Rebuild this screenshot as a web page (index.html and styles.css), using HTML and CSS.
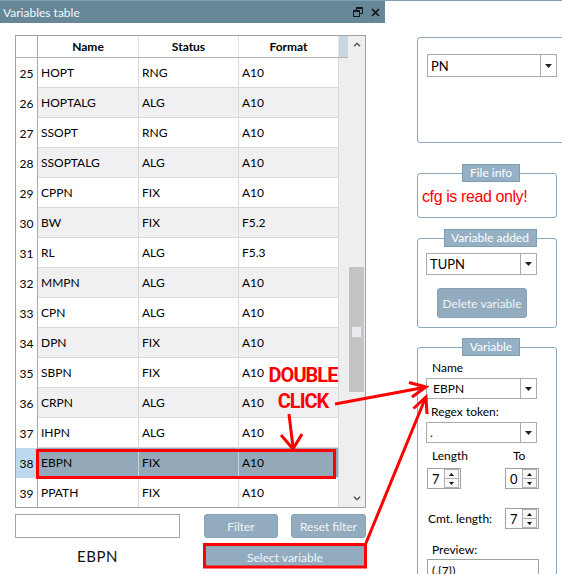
FILE: index.html
```html
<!DOCTYPE html>
<html>
<head>
<meta charset="utf-8">
<title>Variables table</title>
<link rel="stylesheet" href="styles.css">
</head>
<body>
<div class="window">
  <div class="left">
    <div class="titlebar">
      <span class="title">Variables table</span>
      <span class="tb-icons">
        <svg class="ic-restore" width="10" height="10" viewBox="0 0 10 10"><path d="M3.5 3 V0.5 H9.5 V6.5 H7" fill="none" stroke="#161616" stroke-width="1"/><rect x="3" y="0" width="7" height="2" fill="#161616"/><rect x="0.5" y="3.5" width="6" height="6" fill="none" stroke="#161616" stroke-width="1"/><rect x="0" y="3" width="7" height="2" fill="#161616"/></svg>
        <svg class="ic-close" width="9" height="9" viewBox="0 0 9 9"><path d="M1 1 L8 8 M8 1 L1 8" stroke="#161616" stroke-width="1.7" fill="none"/></svg>
      </span>
    </div>
    <div class="pane">
      <div class="table">
        <div class="grid">
          <div class="row head"><div class="c rh"></div><div class="c col-name">Name</div><div class="c col-status">Status</div><div class="c col-format">Format</div><div class="filler"></div></div>
          <div class="row"><div class="c rh">25</div><div class="c col-name">HOPT</div><div class="c col-status">RNG</div><div class="c col-format">A10</div><div class="filler"></div></div>
          <div class="row alt"><div class="c rh">26</div><div class="c col-name">HOPTALG</div><div class="c col-status">ALG</div><div class="c col-format">A10</div><div class="filler"></div></div>
          <div class="row"><div class="c rh">27</div><div class="c col-name">SSOPT</div><div class="c col-status">RNG</div><div class="c col-format">A10</div><div class="filler"></div></div>
          <div class="row alt"><div class="c rh">28</div><div class="c col-name">SSOPTALG</div><div class="c col-status">ALG</div><div class="c col-format">A10</div><div class="filler"></div></div>
          <div class="row"><div class="c rh">29</div><div class="c col-name">CPPN</div><div class="c col-status">FIX</div><div class="c col-format">A10</div><div class="filler"></div></div>
          <div class="row alt"><div class="c rh">30</div><div class="c col-name">BW</div><div class="c col-status">FIX</div><div class="c col-format">F5.2</div><div class="filler"></div></div>
          <div class="row"><div class="c rh">31</div><div class="c col-name">RL</div><div class="c col-status">ALG</div><div class="c col-format">F5.3</div><div class="filler"></div></div>
          <div class="row alt"><div class="c rh">32</div><div class="c col-name">MMPN</div><div class="c col-status">ALG</div><div class="c col-format">A10</div><div class="filler"></div></div>
          <div class="row"><div class="c rh">33</div><div class="c col-name">CPN</div><div class="c col-status">ALG</div><div class="c col-format">A10</div><div class="filler"></div></div>
          <div class="row alt"><div class="c rh">34</div><div class="c col-name">DPN</div><div class="c col-status">FIX</div><div class="c col-format">A10</div><div class="filler"></div></div>
          <div class="row"><div class="c rh">35</div><div class="c col-name">SBPN</div><div class="c col-status">FIX</div><div class="c col-format">A10</div><div class="filler"></div></div>
          <div class="row alt"><div class="c rh">36</div><div class="c col-name">CRPN</div><div class="c col-status">ALG</div><div class="c col-format">A10</div><div class="filler"></div></div>
          <div class="row"><div class="c rh">37</div><div class="c col-name">IHPN</div><div class="c col-status">ALG</div><div class="c col-format">A10</div><div class="filler"></div></div>
          <div class="row sel"><div class="c rh">38</div><div class="c col-name">EBPN</div><div class="c col-status">FIX</div><div class="c col-format">A10</div><div class="filler"></div></div>
          <div class="row"><div class="c rh">39</div><div class="c col-name">PPATH</div><div class="c col-status">FIX</div><div class="c col-format">A10</div><div class="filler"></div></div>
        </div>
        <div class="vscroll">
          <div class="sb-btn"><svg width="8" height="5" viewBox="0 0 8 5"><path d="M1 4.2 L4 1.2 L7 4.2" fill="none" stroke="#555" stroke-width="1.5"/></svg></div>
          <div class="sb-track"><div class="thumb"><span class="grip"></span></div></div>
          <div class="sb-btn"><svg width="8" height="5" viewBox="0 0 8 5"><path d="M1 0.8 L4 3.8 L7 0.8" fill="none" stroke="#555" stroke-width="1.5"/></svg></div>
        </div>
      </div>
      <div class="bottom">
        <div class="filter-col">
          <div class="textbox"></div>
          <div class="sel-label">EBPN</div>
        </div>
        <div class="btn-col">
          <div class="btn-row">
            <button class="btn btn-filter">Filter</button>
            <button class="btn btn-reset">Reset filter</button>
          </div>
          <button class="btn btn-select">Select variable</button>
        </div>
      </div>
    </div>
  </div>
  <div class="right">
    <div class="box1">
      <div class="combo combo-pn"><span class="cv">PN</span><span class="dd"><svg width="7" height="4" viewBox="0 0 7 4"><path d="M0 0 H7 L3.5 4 Z" fill="#222"/></svg></span></div>
    </div>
    <fieldset class="grp grp-info">
      <legend class="lg-info">File info</legend>
      <div class="ro">cfg is read only!</div>
    </fieldset>
    <fieldset class="grp grp-added">
      <legend class="lg-added">Variable added</legend>
      <div class="gbody">
        <div class="combo"><span class="cv">TUPN</span><span class="dd"><svg width="7" height="4" viewBox="0 0 7 4"><path d="M0 0 H7 L3.5 4 Z" fill="#222"/></svg></span></div>
        <button class="btn btn-del">Delete variable</button>
      </div>
    </fieldset>
    <fieldset class="grp grp-var">
      <legend class="lg-var">Variable</legend>
      <div class="gbody">
        <div class="lbl lbl-name">Name</div>
        <div class="combo combo-sm"><span class="cv cv-e">EBPN</span><span class="dd"><svg width="7" height="4" viewBox="0 0 7 4"><path d="M0 0 H7 L3.5 4 Z" fill="#222"/></svg></span></div>
        <div class="lbl lbl-regex">Regex token:</div>
        <div class="combo combo-sm"><span class="cv">.</span><span class="dd"><svg width="7" height="4" viewBox="0 0 7 4"><path d="M0 0 H7 L3.5 4 Z" fill="#222"/></svg></span></div>
        <div class="lenrow"><span class="lbl len">Length</span><span class="lbl to">To</span></div>
        <div class="spinrow">
          <div class="spin spin-a"><span>7</span><span class="sbtns"><span class="sbt"><svg width="5" height="3" viewBox="0 0 5 3"><path d="M0 3 H5 L2.5 0 Z" fill="#111"/></svg></span><span class="sbt"><svg width="5" height="3" viewBox="0 0 5 3"><path d="M0 0 H5 L2.5 3 Z" fill="#111"/></svg></span></span></div>
          <div class="spin"><span>0</span><span class="sbtns"><span class="sbt"><svg width="5" height="3" viewBox="0 0 5 3"><path d="M0 3 H5 L2.5 0 Z" fill="#111"/></svg></span><span class="sbt"><svg width="5" height="3" viewBox="0 0 5 3"><path d="M0 0 H5 L2.5 3 Z" fill="#111"/></svg></span></span></div>
        </div>
        <div class="cmtrow">
          <span class="cmt">Cmt. length:</span>
          <div class="spin"><span>7</span><span class="sbtns"><span class="sbt"><svg width="5" height="3" viewBox="0 0 5 3"><path d="M0 3 H5 L2.5 0 Z" fill="#111"/></svg></span><span class="sbt"><svg width="5" height="3" viewBox="0 0 5 3"><path d="M0 0 H5 L2.5 3 Z" fill="#111"/></svg></span></span></div>
        </div>
        <div class="lbl lbl-prev">Preview:</div>
        <div class="preview">(.{7})</div>
      </div>
    </fieldset>
  </div>
</div>

<svg class="annot" width="562" height="574" viewBox="0 0 562 574">
  <g fill="none" stroke="#ff0000" stroke-width="3" stroke-linejoin="miter">
    <rect x="37.5" y="450.5" width="297" height="27"/>
    <rect x="204.5" y="544.5" width="161" height="22.5"/>
    <path d="M289 414 L293 447"/>
    <path d="M281 435 L293 449 L302 434"/>
    <path d="M335 404 L424 387.5"/>
    <path d="M409 382.5 L426 387 L412 397"/>
    <path d="M366 543 L425 399"/>
    <path d="M413.5 408.5 L426 397 L427 414"/>
  </g>
</svg>
<div class="dblclick">DOUBLE<br>CLICK</div>
</body>
</html>
```

FILE: styles.css
```css
* { box-sizing: border-box; }
html, body { margin: 0; padding: 0; }
body {
  width: 562px;
  height: 574px;
  overflow: hidden;
  background: #ffffff;
  font-family: Lato, "Noto Sans", sans-serif;
  font-size: 12px;
  color: #000;
  position: relative;
}
button { font-family: inherit; font-size: 12px; padding: 0; margin: 0; }

.window {
  display: flex;
  border-top: 1px solid #7fa0b3;
  height: 574px;
}
.left { width: 385px; flex: none; }
.right { width: 177px; flex: none; padding: 36px 0 0 32px; }

/* title bar */
.titlebar {
  height: 22px;
  background: #658797;
  color: #f5f7f8;
  display: flex;
  align-items: center;
  padding: 1px 5px 0 3px;
}
.title { flex: 1; font-size: 12px; }
.tb-icons { display: flex; align-items: center; gap: 8px; }
.ic-restore { margin-top: -2px; }

/* table */
.pane { padding: 12px 0 0 15px; }
.table {
  width: 351px;
  height: 473px;
  border: 1px solid #a0a0a0;
  display: flex;
}
.grid { width: 332px; overflow: hidden; background: #efeeef; }
.row { display: flex; height: 30px; }
.row.head { height: 22px; border-bottom: 1px solid #b4b4b4; }
.c {
  display: flex;
  align-items: center;
  padding-left: 3px;
  border-right: 1px solid #d9d9d9;
  border-bottom: 1px solid #d9d9d9;
  background: #ffffff;
  white-space: nowrap;
}
.rh {
  width: 22px;
  padding: 0;
  justify-content: center;
  border-right: 1px solid #a8a8a8;
  border-bottom: none;
  background: #ffffff;
}
.col-name { width: 101px; }
.col-status { width: 100px; }
.col-format { width: 100px; }
.filler { flex: 1; background: #efeeef; }
.row.head .c {
  justify-content: center;
  padding: 0;
  font-weight: 700;
  border-bottom: none;
  border-right-color: #e2e2e2;
}
.row.head .rh { border-right-color: #a8a8a8; }
.row.head .filler { background: #c8d8e2; }
.row.alt .c:not(.rh) { background: #f0eff1; }
.row.sel .c:not(.rh) { background: #93a9ba; border-right-color: #c9d2d9; }
.row.sel .rh { background: #bcd9ef; }

.vscroll {
  width: 17px;
  display: flex;
  flex-direction: column;
  background: #efefef;
}
.sb-btn {
  height: 17px;
  display: flex;
  align-items: center;
  justify-content: center;
}
.sb-track { flex: 1; padding-top: 214px; }
.thumb {
  height: 125px;
  margin: 0 1px;
  background: #c4c3c6;
  display: flex;
  align-items: center;
  justify-content: center;
}
.grip { width: 9px; height: 10px; background: #eceaee; margin-top: 4px; }

/* bottom controls */
.bottom { display: flex; margin-top: 6px; }
.filter-col { width: 165px; }
.textbox { height: 24px; border: 1px solid #a5a5a5; background: #fff; }
.sel-label {
  margin-top: 9px;
  text-align: center;
  font-size: 15px;
  line-height: 18px;
  letter-spacing: 0.6px;
  color: #111;
}
.btn-col { margin-left: 24px; width: 162px; }
.btn-row { display: flex; gap: 13px; }
.btn {
  background: #93abbe;
  border: 1px solid #88a1b4;
  border-radius: 3px;
  color: #f1f5f8;
  height: 24px;
}
.btn-filter { width: 74px; }
.btn-reset { width: 75px; }
.btn-select { width: 162px; height: 22px; margin-top: 8px; border-radius: 2px; }

/* right panel */
.box1 {
  width: 150px;
  height: 106px;
  border: 1px solid #8da7b9;
  border-radius: 3px;
  padding: 16px 0 0 9px;
}
.combo {
  display: flex;
  height: 22px;
  width: 111px;
  border: 1px solid #ababab;
  background: #fff;
  font-size: 13px;
}
.combo-pn { width: 130px; height: 23px; }
.combo-sm { height: 21px; font-size: 12px; }
.cv { flex: 1; display: flex; align-items: center; padding-left: 3px; }
.cv-e { padding-left: 6px; }
.dd {
  width: 16px;
  border-left: 1px solid #ababab;
  display: flex;
  align-items: center;
  justify-content: center;
}

.grp {
  width: 140px;
  margin: 0;
  padding: 0;
  border: 1px solid #8da7b9;
  border-radius: 3px;
  min-inline-size: 0;
}
.grp legend {
  height: 18px;
  line-height: 16px;
  padding: 0;
  text-align: center;
  background: #95b0c5;
  border: 1px solid #809eb3;
  color: #ffffff;
  font-size: 12px;
}
.lg-info { width: 58px; margin-left: 4px; }
.lg-added { width: 93px; margin-left: 3px; }
.lg-var { width: 58px; margin-left: 4px; }

.grp-info { margin-top: 21px; }
.grp-added { margin-top: 11px; }
.grp-var { margin-top: 10px; height: 300px; }

.ro {
  padding: 6px 0 11px 4px;
  font-family: "Liberation Sans", Arial, sans-serif;
  font-size: 16px;
  line-height: 18px;
  letter-spacing: -0.4px;
  color: #ff0000;
}
.gbody { padding: 6px 0 9px 8px; }
.btn-del { display: block; width: 90px; height: 30px; margin: 13px 0 0 11px; }

.grp-var .gbody { padding-top: 4px; }
.lbl { line-height: 16px; padding-left: 6px; }
.combo-sm { margin-top: 2px; }
.lbl-regex { margin-top: 5px; padding-left: 5px; }
.lenrow { display: flex; margin-top: 5px; }
.lenrow .len { width: 79px; }
.lenrow .to { padding-left: 8px; }
.spinrow { display: flex; margin-top: 4px; padding-left: 1px; gap: 44px; }
.spin {
  width: 34px;
  height: 21px;
  border: 1px solid #a0a0a0;
  background: #fff;
  display: flex;
  align-items: center;
  justify-content: space-between;
  padding-left: 4px;
  font-size: 13px;
}
.sbtns {
  width: 15px;
  height: 19px;
  display: flex;
  flex-direction: column;
  margin-right: 1px;
}
.sbt {
  flex: 1;
  border: 1px solid #b0b0b0;
  background: #f6f6f6;
  display: flex;
  align-items: center;
  justify-content: center;
}
.sbt + .sbt { border-top: none; }
.cmtrow {
  display: flex;
  align-items: center;
  justify-content: space-between;
  width: 113px;
  margin-top: 19px;
  padding-left: 2px;
}
.cmt { font-size: 12px; }
.lbl-prev { margin-top: 13px; }
.preview {
  margin-top: 1px;
  margin-left: 1px;
  width: 112px;
  height: 22px;
  border: 1px solid #a0a0a0;
  padding: 3px 0 0 4px;
}

/* annotation overlay */
.annot { position: absolute; left: 0; top: 0; pointer-events: none; }
.dblclick {
  position: absolute;
  left: 263px;
  top: 362px;
  width: 80px;
  text-align: center;
  font-family: Roboto, "Liberation Sans", sans-serif;
  font-weight: 700;
  font-size: 20px;
  line-height: 26px;
  letter-spacing: -1px;
  color: #ff0000;
}
```
